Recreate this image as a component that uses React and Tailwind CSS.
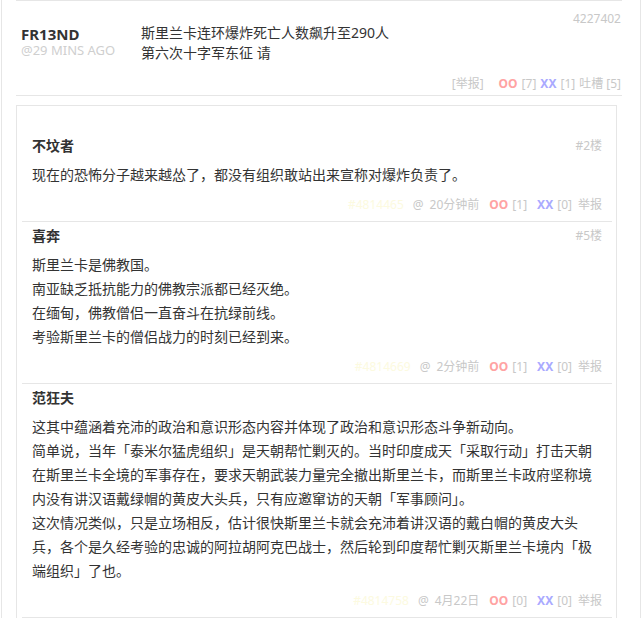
const font = { fontFamily: '"Noto Sans", "Noto Sans CJK SC", sans-serif' };

const comments = [
  {
    id: "#4814465",
    name: "不坟者",
    floor: "#2楼",
    time: "20分钟前",
    oo: 1,
    xx: 0,
    lines: ["现在的恐怖分子越来越怂了，都没有组织敢站出来宣称对爆炸负责了。"],
  },
  {
    id: "#4814669",
    name: "喜奔",
    floor: "#5楼",
    time: "2分钟前",
    oo: 1,
    xx: 0,
    lines: [
      "斯里兰卡是佛教国。",
      "南亚缺乏抵抗能力的佛教宗派都已经灭绝。",
      "在缅甸，佛教僧侣一直奋斗在抗绿前线。",
      "考验斯里兰卡的僧侣战力的时刻已经到来。",
    ],
  },
  {
    id: "#4814758",
    name: "范狂夫",
    floor: "",
    time: "4月22日",
    oo: 0,
    xx: 0,
    lines: [
      "这其中蕴涵着充沛的政治和意识形态内容并体现了政治和意识形态斗争新动向。",
      "简单说，当年「泰米尔猛虎组织」是天朝帮忙剿灭的。当时印度成天「采取行动」打击天朝在斯里兰卡全境的军事存在，要求天朝武装力量完全撤出斯里兰卡，而斯里兰卡政府坚称境内没有讲汉语戴绿帽的黄皮大头兵，只有应邀窜访的天朝「军事顾问」。",
      "这次情况类似，只是立场相反，估计很快斯里兰卡就会充沛着讲汉语的戴白帽的黄皮大头兵，各个是久经考验的忠诚的阿拉胡阿克巴战士，然后轮到印度帮忙剿灭斯里兰卡境内「极端组织」了也。",
    ],
  },
];

const Comment = ({ c }) => (
  <div className="border-b border-[#e6e6e6] px-[10px] pt-[2px] pb-[4px]">
    <div className="flex items-center justify-between leading-[24px]">
      <span className="text-[14px] font-bold text-[#333]">{c.name}</span>
      <span className="text-[12px] text-[#c8c8c8]">{c.floor}</span>
    </div>
    <div className="mt-[5px] text-[14px] leading-[24px] text-[#333]">
      {c.lines.map((l, i) => (
        <p key={i}>{l}</p>
      ))}
    </div>
    <div className="mt-[6px] flex justify-end text-[12px] leading-[24px] text-[#c8c8c8]">
      <span className="text-[#fcfae0]">{c.id}</span>
      <span className="ml-[9px]">@</span>
      <span className="ml-[6px]">{c.time}</span>
      <span className="ml-[10px] font-bold text-[#ffa3a3]">OO</span>
      <span className="ml-[4px]">[{c.oo}]</span>
      <span className="ml-[10px] font-bold text-[#aaaaff]">XX</span>
      <span className="ml-[4px]">[{c.xx}]</span>
      <span className="ml-[6px]">举报</span>
    </div>
  </div>
);

export default function App() {
  return (
    <div className="h-[618px] w-[641px] overflow-hidden bg-white" style={font}>
      <div className="ml-px h-full w-[640px] border-x border-[#e6e6e6]">
        <div className="ml-[14px] mr-[18px] border-y border-[#e6e6e6] pt-[8px] pr-[1px] pb-[1px] pl-[5px]">
          <div className="flex items-start">
            <div className="mt-[16px] w-[120px] shrink-0">
              <div className="text-[15px] font-bold leading-[18px] text-[#333]">FR13ND</div>
              <div className="text-[13px] leading-[15px] text-[#cfcfcf]">@29 MINS AGO</div>
            </div>
            <div className="mt-[14px] flex-1 text-[14px] leading-[20px] text-[#333]">
              <p>斯里兰卡连环爆炸死亡人数飙升至290人</p>
              <p>第六次十字军东征 请</p>
            </div>
            <div className="text-[12px] leading-[20px] text-[#c8c8c8]">4227402</div>
          </div>
          <div className="mt-[11px] flex justify-end text-[12px] leading-[20px] text-[#c8c8c8]">
            <span>[举报]</span>
            <span className="ml-[15px] font-bold text-[#ffa3a3]">OO</span>
            <span className="ml-[4px]">[7]</span>
            <span className="ml-[4px] font-bold text-[#aaaaff]">XX</span>
            <span className="ml-[4px]">[1]</span>
            <span className="ml-[4px]">吐槽</span>
            <span className="ml-[3px]">[5]</span>
          </div>
        </div>
        <div className="mt-[9px] ml-[14px] w-[601px] border border-[#e6e6e6] pt-[26px] pr-[4px] pb-[40px] pl-[5px]">
          {comments.map((c) => (
            <Comment key={c.id} c={c} />
          ))}
        </div>
      </div>
    </div>
  );
}
